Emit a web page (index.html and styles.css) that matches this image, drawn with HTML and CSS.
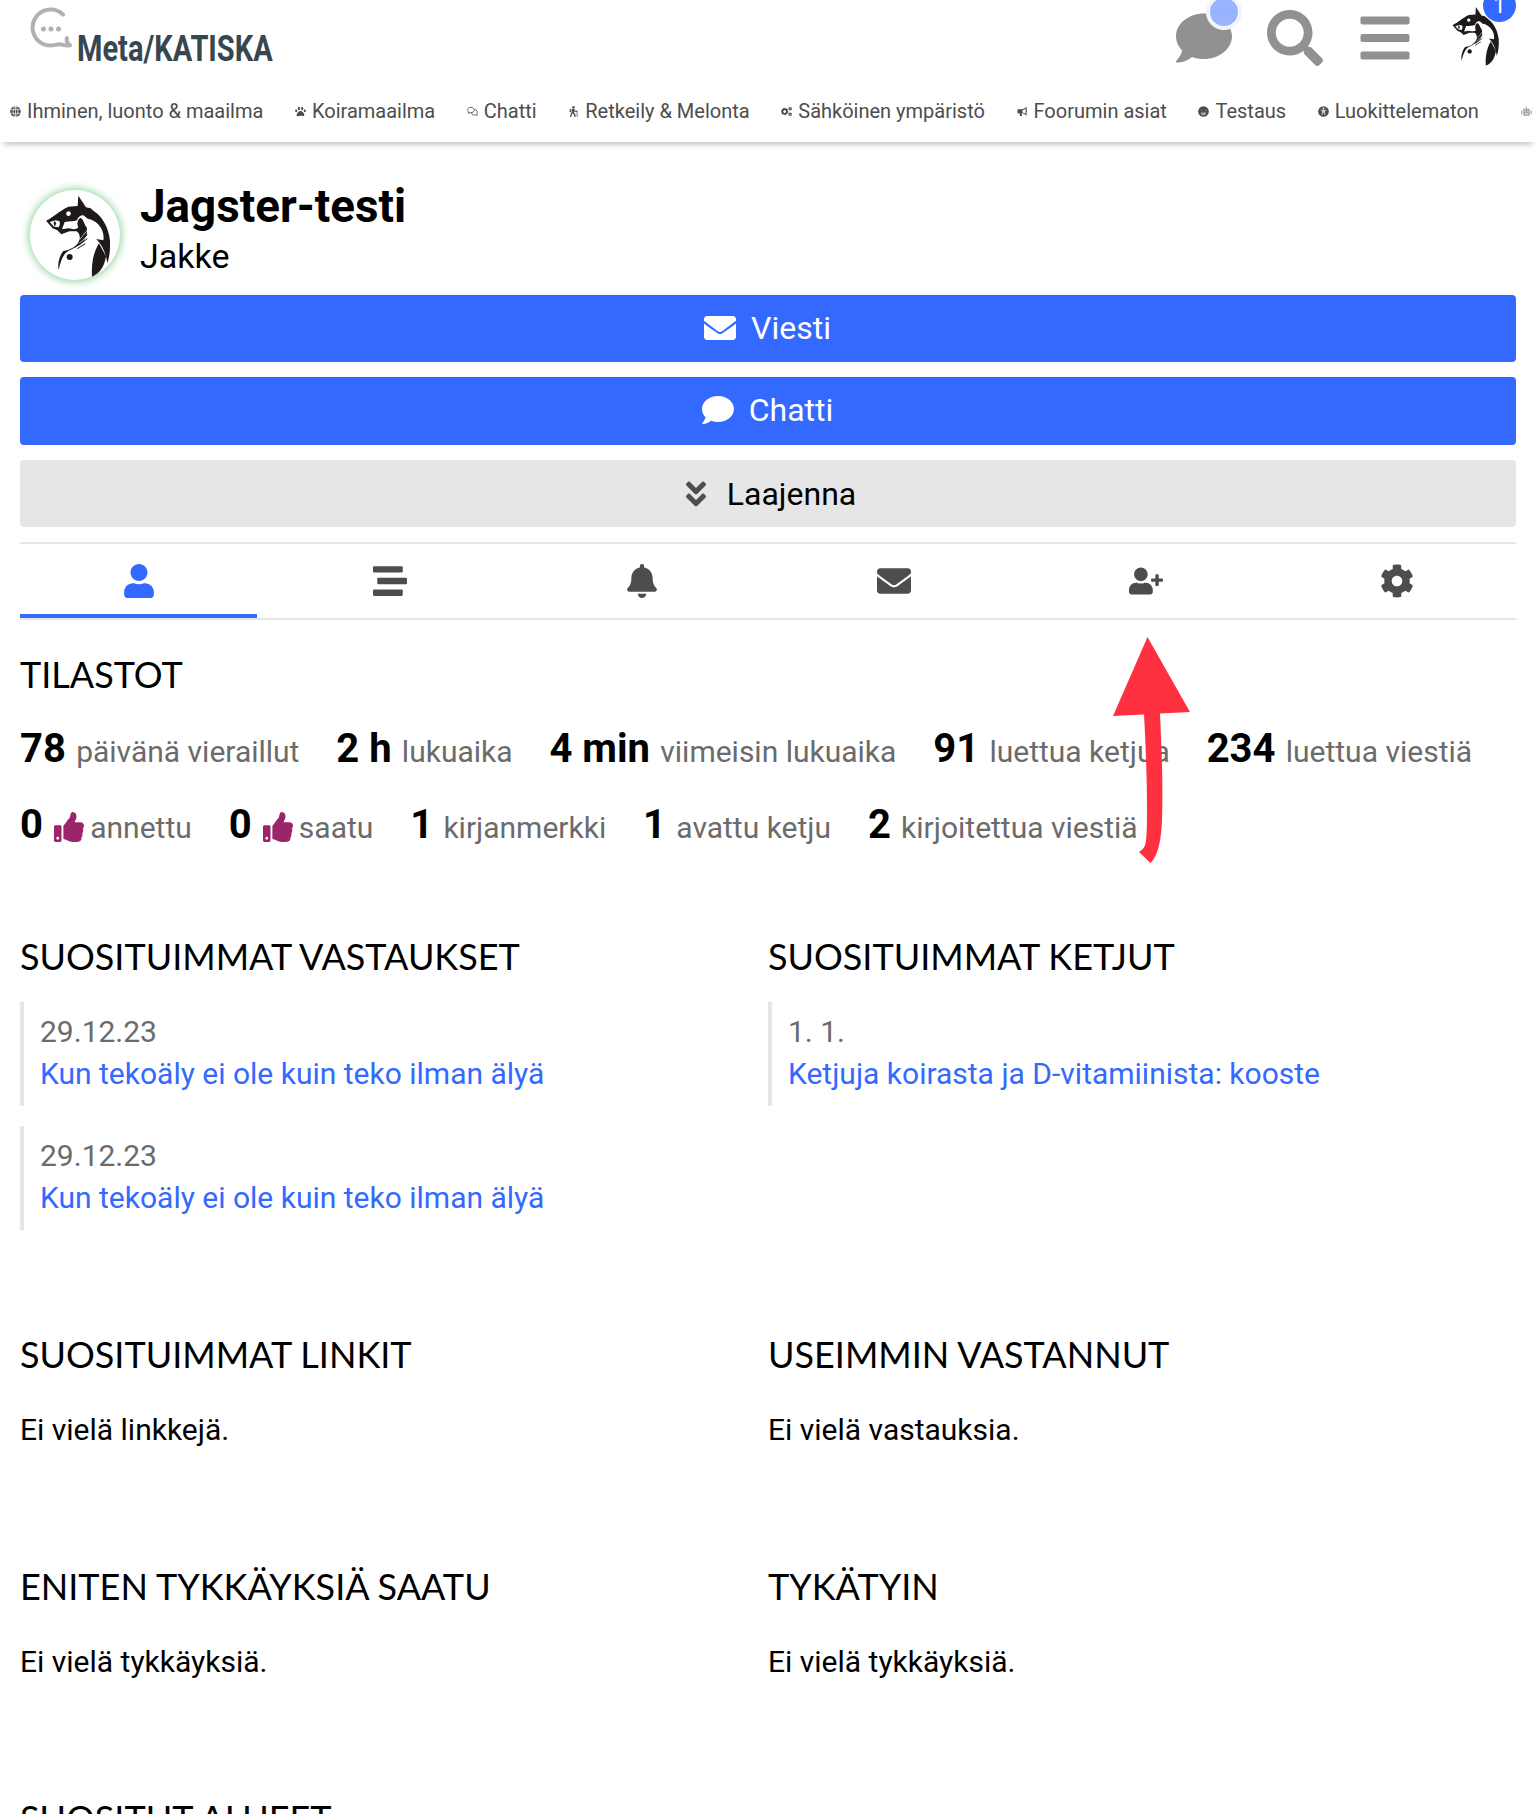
FILE: index.html
```
<!DOCTYPE html>
<html lang="fi">
<head>
  <meta charset="UTF-8" />
  <meta name="viewport" content="width=device-width, initial-scale=1.0"/>
  <title>Jagster-testi - Meta/KATISKA</title>
  <link rel="stylesheet" href="styles.css">
</head>
<body>

  <!-- shared icons -->
  <svg class="sprite" width="0" height="0">
    <symbol id="comment" viewBox="0 0 512 512"><path d="M256 32C114.6 32 0 125.1 0 240c0 49.6 21.4 95 57 130.7C44.5 421.1 2.7 466 2.2 466.5c-2.2 2.3-2.8 5.7-1.5 8.7S4.8 480 8 480c66.3 0 116-31.8 140.6-51.4 32.7 12.3 69 19.4 107.4 19.4 141.4 0 256-93.1 256-208S397.4 32 256 32z"/></symbol>
    <symbol id="envelope" viewBox="0 0 512 512"><path d="M502.3 190.8c3.9-3.1 9.7-.2 9.7 4.7V400c0 26.5-21.5 48-48 48H48c-26.5 0-48-21.5-48-48V195.6c0-5 5.7-7.8 9.7-4.7 22.4 17.4 52.1 39.5 154.1 113.6 21.1 15.4 56.7 47.8 92.2 47.6 35.7.3 72-32.8 92.3-47.6 102-74.1 131.6-96.3 154-113.7zM256 320c23.2.4 56.6-29.2 73.4-41.4 132.7-96.3 142.8-104.7 173.4-128.7 5.8-4.5 9.2-11.5 9.2-18.9v-19c0-26.5-21.5-48-48-48H48c-26.5 0-48 21.5-48 48v19c0 7.4 3.4 14.3 9.2 18.9 30.6 23.9 40.7 32.4 173.4 128.7 16.8 12.2 50.2 41.8 73.4 41.4z"/></symbol>
    <symbol id="thumbs-up" viewBox="0 0 512 512"><path d="M104 224H24c-13.255 0-24 10.745-24 24v240c0 13.255 10.745 24 24 24h80c13.255 0 24-10.745 24-24V248c0-13.255-10.745-24-24-24zM64 472c-13.255 0-24-10.745-24-24s10.745-24 24-24 24 10.745 24 24-10.745 24-24 24zM384 81.452c0 42.416-25.97 66.208-33.277 94.548h101.723c33.397 0 59.397 27.746 59.553 58.098.084 17.938-7.546 37.249-19.439 49.197l-.11.11c9.836 23.337 8.237 56.037-9.308 79.469 8.681 25.895-.069 57.704-16.382 74.757 4.298 17.598 2.244 32.575-6.148 44.632C440.202 511.587 389.616 512 346.839 512l-2.845-.001c-48.287-.017-87.806-17.598-119.56-31.725-15.957-7.099-36.821-15.887-52.651-16.178-6.54-.12-11.783-5.457-11.783-11.998v-213.77c0-3.2 1.282-6.271 3.558-8.521 39.614-39.144 56.648-80.587 89.117-113.111 14.804-14.832 20.188-37.236 25.393-58.902C282.515 39.293 291.817 0 312 0c24 0 72 8 72 81.452z"/></symbol>
    <symbol id="dog" viewBox="90 60 270 270">
      <g fill="#1d1a19">
        <path fill-rule="evenodd" d="M235 77L258 112L272 115L280 122C306 138 326 172 330 212C331 240 328 262 322 280C318 252 308 226 289 207L310 211C316 178 290 150 263 146L252 137C243 133 234 141 231 151C222 155 208 154 194 156L186 178L206 175C218 178 228 180 235 172C230 164 231 148 242 143C252 150 252 162 260 172C264 190 258 206 246 218C230 234 208 238 196 250C186 262 180 280 176 300C172 280 178 258 190 243C210 240 226 232 236 216C242 204 240 192 230 184L208 184L184 193L172 181L158 175L138 152C160 142 176 124 205 110L233 108ZM205 124A7 7 0 1 0 206 138A7 7 0 1 0 205 124ZM149 156L160 153L166 151L178 153L180 162L176 172L162 170Z"/>
        <path d="M163 152L169 160L164 170L161 160Z"/>
        <circle cx="209" cy="261" r="9"/>
        <path d="M297 220L318 259C314 286 302 310 276 320C274 286 278 250 297 220Z"/>
      </g>
      <path d="M238 214L262 194M236 226L262 206M232 236L256 221" stroke="#1d1a19" stroke-width="3" fill="none"/>
      <path d="M240 208L262 180M238 220L264 196" stroke="#fff" stroke-width="2" fill="none"/>
    </symbol>
  </svg>

  <header class="site-header">
    <div class="top-bar">
      <a class="logo" href="#">
        <svg class="logo-bubble" viewBox="0 0 44 44">
          <path d="M33 8.5A18 18 0 1 0 17 39.2C21 40.5 26 38.5 29 38.3S36 40.5 40 39.3C37 37 36 34.5 37 32" fill="none" stroke="#b1b1b1" stroke-width="4" stroke-linecap="round" stroke-linejoin="round"/>
          <g fill="#b1b1b1"><circle cx="13.5" cy="23" r="2.500"/><circle cx="21" cy="23" r="2.500"/><circle cx="28.500" cy="23" r="2.500"/></g>
        </svg>
        <span class="logo-text">Meta/KATISKA</span>
      </a>
      <div class="header-icons">
        <a class="header-icon" href="#"><svg><use href="#comment"/></svg><span class="chat-dot"></span></a>
        <a class="header-icon" href="#"><svg viewBox="0 0 512 512"><path d="M505 442.7L405.3 343c-4.5-4.5-10.6-7-17-7H372c27.6-35.3 44-79.7 44-128C416 93.1 322.9 0 208 0S0 93.1 0 208s93.1 208 208 208c48.3 0 92.7-16.4 128-44v16.3c0 6.4 2.5 12.5 7 17l99.7 99.7c9.4 9.4 24.6 9.4 33.9 0l28.3-28.3c9.4-9.4 9.4-24.6.1-34zM208 336c-70.7 0-128-57.2-128-128 0-70.7 57.2-128 128-128 70.7 0 128 57.2 128 128 0 70.7-57.2 128-128 128z"/></svg></a>
        <a class="header-icon" href="#"><svg viewBox="-32 0 512 512"><rect y="60" width="448" height="72" rx="16"/><rect y="220" width="448" height="72" rx="16"/><rect y="380" width="448" height="72" rx="16"/></svg></a>
        <a class="header-avatar" href="#"><svg><use href="#dog"/></svg><span class="badge">1</span></a>
      </div>
    </div>
    <nav class="categories">
      <a href="#"><svg viewBox="0 0 12 12"><circle cx="6" cy="6" r="5.8"/><path d="M0 4h12M0 8h12M6 0v12M6 0C2.500 3 2.500 9 6 12M6 0C9.500 3 9.500 9 6 12" stroke="#fff" stroke-width=".7" fill="none"/></svg>Ihminen, luonto &amp; maailma</a>
      <a href="#"><svg viewBox="0 0 12 12"><path d="M6 5.500C4 5.500 1.800 8.200 1.800 10S4 11.300 6 10.700S10.200 11.800 10.200 10S8 5.500 6 5.500Z"/><ellipse cx="1.300" cy="5.300" rx="1.200" ry="1.600"/><ellipse cx="4.200" cy="2.700" rx="1.200" ry="1.800"/><ellipse cx="7.800" cy="2.700" rx="1.200" ry="1.800"/><ellipse cx="10.700" cy="5.300" rx="1.200" ry="1.600"/></svg>Koiramaailma</a>
      <a href="#"><svg viewBox="0 0 12 12"><path d="M1 7.800C2 7.500 2 7 1.300 6C-.5 3 2 1.500 4.200 1.500S8 2.800 8 4.500S6 7.300 4 7.300ZM8.200 4C11 4 12 6.200 10.700 8.200L11.300 10C9 9.800 5.500 10.500 4.600 7.500" fill="none" stroke="#4d4d4d" stroke-width=".9"/></svg>Chatti</a>
      <a href="#"><svg viewBox="0 0 12 12"><circle cx="6" cy="1.300" r="1.300"/><path d="M4.600 3L7 3L7.500 5L9.500 5.500V6.500L6.800 6L6.500 7.200L8 9L8.500 12H7L6.500 9.500L4.700 8L3.500 12H2L4 6ZM2.500 3L3.800 3.400L3 6.800L1.500 6.300ZM9.500 4.500h.8V12h-.8Z"/></svg>Retkeily &amp; Melonta</a>
      <a href="#"><svg viewBox="0 0 12 12"><circle cx="4" cy="6" r="2.500" fill="none" stroke="#4d4d4d" stroke-width="2"/><circle cx="4" cy="6" r="3.600" fill="none" stroke="#4d4d4d" stroke-width="1" stroke-dasharray="1.800 1.900"/><circle cx="10" cy="3" r="1.300" fill="none" stroke="#4d4d4d" stroke-width="1.300"/><circle cx="10" cy="9" r="1.300" fill="none" stroke="#4d4d4d" stroke-width="1.300"/></svg>Sähköinen ympäristö</a>
      <a href="#"><svg viewBox="0 0 12 12"><path fill-rule="evenodd" d="M.5 3.500H5C7.500 3.500 9 2 10.500.8V4.800Q11.800 5.500 10.500 6.800V10.500C9 9.200 7.500 8 5.200 8Q5 9.500 5.800 11H3.500Q2.700 9.500 3 8H.5ZM6 4.600V7Q8 7.300 9.400 8.300V3Q8 4.300 6 4.600Z"/></svg>Foorumin asiat</a>
      <a href="#"><svg viewBox="0 0 12 12"><circle cx="6" cy="6" r="5.8"/><path d="M2.800 7H9.200Q8.500 10 6 10T2.800 7ZM3 4L5 4.600L3 5.200ZM9 4L7 4.600L9 5.200Z" fill="#aaa"/></svg>Testaus</a>
      <a href="#"><svg viewBox="0 0 12 12"><circle cx="6" cy="6" r="5.8"/><circle cx="6" cy="2.700" r="1" fill="#fff"/><path d="M3 4.500L5 5V7L4.300 10M9 4.500L7 5V7L7.700 10M5 5H7M5.500 5V7H6.500V5" stroke="#fff" stroke-width=".8" fill="none"/></svg>Luokittelematon</a>
      <a class="faded" href="#"><svg viewBox="0 0 12 12"><path d="M5.500.5h1V3h3v7.500h-7V3h3ZM.2 5h1.300v4H.2ZM10.500 5h1.300v4h-1.300Z"/><path d="M4 5.500h1.200M6.800 5.500H8M4 8.500h4" stroke="#fff" stroke-width="1"/></svg></a>
    </nav>
  </header>

  <main>
    <section class="profile">
      <div class="avatar"><svg><use href="#dog"/></svg></div>
      <div class="names">
        <h1>Jagster-testi</h1>
        <div class="full-name">Jakke</div>
      </div>
    </section>

    <div class="controls">
      <button class="btn primary"><svg><use href="#envelope"/></svg>Viesti</button>
      <button class="btn primary"><svg><use href="#comment"/></svg>Chatti</button>
      <button class="btn expand"><svg viewBox="0 0 320 512"><path d="M143 256.300L7 120.300c-9.400-9.400-9.400-24.600 0-33.900l22.600-22.600c9.400-9.400 24.600-9.400 33.900 0l96.400 96.400 96.400-96.400c9.400-9.400 24.600-9.400 33.900 0L313 86.300c9.400 9.400 9.400 24.600 0 33.900l-136 136c-9.400 9.500-24.600 9.500-34 .1zm34 192l136-136c9.400-9.400 9.400-24.600 0-33.900l-22.600-22.600c-9.400-9.400-24.600-9.400-33.900 0L160 352.100l-96.400-96.400c-9.400-9.400-24.600-9.400-33.900 0L7 278.300c-9.400 9.400-9.400 24.600 0 33.900l136 136c9.400 9.500 24.600 9.500 34 .1z"/></svg>Laajenna</button>
    </div>

    <nav class="tabs">
      <a class="active" href="#"><svg viewBox="-32 0 512 512"><path d="M224 256c70.700 0 128-57.300 128-128S294.700 0 224 0 96 57.300 96 128s57.300 128 128 128zm89.600 32h-16.700c-22.200 10.200-46.900 16-72.900 16s-50.600-5.800-72.900-16h-16.700C60.200 288 0 348.200 0 422.400V464c0 26.500 21.500 48 48 48h352c26.500 0 48-21.500 48-48v-41.600c0-74.200-60.200-134.400-134.400-134.400z"/></svg></a>
      <a href="#"><svg viewBox="0 0 512 512"><rect y="32" width="448" height="96" rx="16"/><rect x="64" y="208" width="448" height="96" rx="16"/><rect y="384" width="448" height="96" rx="16"/></svg></a>
      <a href="#"><svg viewBox="-32 0 512 512"><path d="M224 512c35.320 0 63.970-28.650 63.970-64H160.030c0 35.350 28.650 64 63.970 64zm215.390-149.710c-19.320-20.760-55.470-51.990-55.470-154.290 0-77.700-54.480-139.900-127.940-155.160V32c0-17.670-14.320-32-31.980-32s-31.980 14.330-31.980 32v20.840C118.560 68.100 64.080 130.300 64.080 208c0 102.300-36.150 133.530-55.470 154.290-6 6.450-8.660 14.160-8.610 21.710.11 16.400 12.980 32 32.100 32h383.800c19.120 0 32-15.600 32.100-32 .05-7.550-2.610-15.270-8.610-21.710z"/></svg></a>
      <a href="#"><svg><use href="#envelope"/></svg></a>
      <a href="#"><svg viewBox="0 0 640 512"><path d="M624 208h-64v-64c0-8.800-7.200-16-16-16h-32c-8.800 0-16 7.200-16 16v64h-64c-8.800 0-16 7.200-16 16v32c0 8.800 7.200 16 16 16h64v64c0 8.800 7.200 16 16 16h32c8.800 0 16-7.200 16-16v-64h64c8.800 0 16-7.200 16-16v-32c0-8.800-7.200-16-16-16zm-400 48c70.700 0 128-57.300 128-128S294.700 0 224 0 96 57.300 96 128s57.300 128 128 128zm89.600 32h-16.700c-22.200 10.200-46.900 16-72.900 16s-50.600-5.800-72.900-16h-16.700C60.200 288 0 348.200 0 422.400V464c0 26.500 21.500 48 48 48h352c26.500 0 48-21.500 48-48v-41.600c0-74.200-60.200-134.400-134.400-134.400z"/></svg></a>
      <a href="#"><svg viewBox="0 0 512 512"><path d="M487.400 315.700l-42.600-24.600c4.300-23.200 4.300-47 0-70.200l42.600-24.600c4.900-2.800 7.100-8.600 5.500-14-11.100-35.600-30-67.800-54.700-94.600-3.800-4.100-10-5.100-14.800-2.300L380.800 110c-17.900-15.400-38.500-27.300-60.800-35.100V25.800c0-5.600-3.900-10.500-9.400-11.700-36.700-8.200-74.300-7.800-109.200 0-5.500 1.200-9.400 6.100-9.400 11.700V75c-22.200 7.900-42.800 19.800-60.800 35.100L88.700 85.500c-4.900-2.800-11-1.900-14.800 2.300-24.700 26.700-43.600 58.900-54.700 94.600-1.700 5.400.6 11.200 5.500 14L67.300 221c-4.300 23.200-4.300 47 0 70.200l-42.600 24.600c-4.900 2.800-7.100 8.600-5.500 14 11.100 35.600 30 67.800 54.700 94.600 3.800 4.100 10 5.100 14.800 2.300l42.600-24.600c17.900 15.400 38.500 27.300 60.800 35.100v49.200c0 5.600 3.900 10.500 9.400 11.700 36.700 8.200 74.300 7.800 109.200 0 5.500-1.200 9.400-6.100 9.400-11.700v-49.200c22.200-7.900 42.800-19.800 60.800-35.100l42.600 24.600c4.900 2.800 11 1.900 14.800-2.300 24.700-26.700 43.600-58.900 54.700-94.600 1.500-5.500-.7-11.300-5.600-14.100zM256 336c-44.100 0-80-35.900-80-80s35.900-80 80-80 80 35.900 80 80-35.900 80-80 80z"/></svg></a>
    </nav>

    <section class="stats">
      <h2>Tilastot</h2>
      <ul>
        <li><b>78</b> päivänä vieraillut</li>
        <li><b>2 h</b> lukuaika</li>
        <li><b>4 min</b> viimeisin lukuaika</li>
        <li><b>91</b> luettua ketjua</li>
        <li><b>234</b> luettua viestiä</li>
        <li><b>0</b> <svg><use href="#thumbs-up"/></svg>annettu</li>
        <li><b>0</b> <svg><use href="#thumbs-up"/></svg>saatu</li>
        <li><b>1</b> kirjanmerkki</li>
        <li><b>1</b> avattu ketju</li>
        <li><b>2</b> kirjoitettua viestiä</li>
      </ul>
    </section>

    <div class="row tall">
      <section>
        <h2>Suosituimmat vastaukset</h2>
        <div class="quote"><time>29.12.23</time><a href="#">Kun tekoäly ei ole kuin teko ilman älyä</a></div>
        <div class="quote"><time>29.12.23</time><a href="#">Kun tekoäly ei ole kuin teko ilman älyä</a></div>
      </section>
      <section>
        <h2>Suosituimmat ketjut</h2>
        <div class="quote"><time>1. 1.</time><a href="#">Ketjuja koirasta ja D-vitamiinista: kooste</a></div>
      </section>
    </div>
    <div class="row">
      <section><h2>Suosituimmat linkit</h2><p>Ei vielä linkkejä.</p></section>
      <section><h2>Useimmin vastannut</h2><p>Ei vielä vastauksia.</p></section>
    </div>
    <div class="row">
      <section><h2>Eniten tykkäyksiä saatu</h2><p>Ei vielä tykkäyksiä.</p></section>
      <section><h2>Tykätyin</h2><p>Ei vielä tykkäyksiä.</p></section>
    </div>
    <div class="row">
      <section><h2>Suositut alueet</h2></section>
    </div>

    <svg class="arrow" viewBox="0 0 80 230"><path d="M35.500 1L78 76L48 77.500C50 120 51 150 50 185C49 205 46 220 38.500 227L27 216C32 213 33 210 34 205C36 190 35 130 32 78.500L1 80Z"/></svg>
  </main>

</body>
</html>
```
FILE: styles.css
```
body {
  margin: 0;
  height: 1814px;
  overflow: hidden;
  font-family: Roboto, sans-serif;
  font-size: 30px;
  line-height: 42px;
  background-color: #fff;
  color: #000;
}

a {
  color: #3369ff;
  text-decoration: none;
}

svg {
  fill: currentColor;
}

.sprite {
  position: absolute;
}

.site-header {
  height: 142px;
  box-shadow: 0 6px 6px -4px rgba(0,0,0,0.28);
}

.top-bar {
  display: flex;
  justify-content: space-between;
  height: 92px;
  padding: 0 30px;
}

.logo {
  display: flex;
  color: #36474f;
}

.logo-bubble {
  width: 44px;
  height: 44px;
  margin-top: 6px;
}

.logo-text {
  width: 200px;
  margin: 28px 0 0 3px;
  font-size: 36.500px;
  font-weight: bold;
  transform: scaleX(0.795);
  transform-origin: left;
}

.header-icons {
  display: flex;
  gap: 34.700px;
}

.header-icon,
.header-avatar {
  position: relative;
  color: #919191;
}

.header-icon svg {
  display: block;
  width: 56px;
  height: 56px;
  margin-top: 10px;
}

.header-avatar {
  margin-left: -7px;
}

.header-avatar svg {
  display: block;
  width: 65px;
  height: 65px;
  margin-top: 3px;
}

.chat-dot {
  position: absolute;
  left: 30px;
  top: -6px;
  width: 28px;
  height: 28px;
  border: 4px solid #f4f5f8;
  border-radius: 50%;
  background-color: #99b4ff;
}

.badge {
  position: absolute;
  left: 42px;
  top: -11px;
  width: 33px;
  height: 33px;
  border-radius: 50%;
  background-color: #3369ff;
  color: #fff;
  font-size: 22px;
  line-height: 33px;
  text-align: center;
}

.categories {
  display: flex;
  gap: 31.600px;
  height: 38px;
  padding-left: 10px;
  overflow: hidden;
  white-space: nowrap;
}

.categories a {
  display: flex;
  align-items: center;
  color: #4d4d4d;
  font-size: 20px;
  line-height: 38px;
}

.categories svg {
  width: 11px;
  height: 11px;
  margin-right: 6px;
}

.categories .faded {
  margin-left: 11px;
  opacity: 0.5;
}

main {
  position: relative;
  padding: 0 20px;
}

.profile {
  display: flex;
  padding: 39px 0 0 10px;
  height: 114px;
}

.avatar {
  width: 90px;
  height: 90px;
  margin-top: 9px;
  border-radius: 50%;
  box-shadow: 0 0 9px 1px #86cf95;
}

.avatar svg {
  width: 90px;
  height: 90px;
}

.names {
  margin-left: 20px;
}

h1 {
  margin: 0;
  font-size: 45.800px;
  line-height: 52px;
}

.full-name {
  font-size: 34px;
  line-height: 46px;
}

.controls {
  display: flex;
  flex-direction: column;
  gap: 15px;
  height: 232px;
}

.btn {
  flex: 1;
  display: flex;
  align-items: center;
  justify-content: center;
  gap: 15px;
  padding: 0 1px 1px 0;
  border: none;
  border-radius: 4px;
  font-family: inherit;
  font-size: 32px;
}

.btn svg {
  width: 32px;
  height: 32px;
}

.primary {
  background-color: #3369ff;
  color: #fff;
}

.expand {
  gap: 21px;
  padding: 1px 0 0 6px;
  background-color: #e6e6e6;
  color: #000;
}

.expand svg {
  width: 20px;
  color: #4d4d4d;
}

.tabs {
  display: flex;
  gap: 14.800px;
  height: 74px;
  margin-top: 15px;
  border-top: 2px solid #e6e6e6;
  border-bottom: 2px solid #e6e6e6;
}

.tabs a {
  flex: 1;
  display: flex;
  align-items: center;
  justify-content: center;
  padding-top: 4px;
  border-bottom: 4px solid transparent;
  color: #4d4d4d;
}

.tabs a.active {
  color: #3369ff;
  border-color: #3369ff;
}

.tabs svg {
  width: 34px;
  height: 34px;
}

h2 {
  margin: 0;
  font-family: Lato, sans-serif;
  font-size: 36px;
  font-weight: normal;
  line-height: 44px;
  text-transform: uppercase;
}

.stats {
  padding-top: 32px;
  height: 282px;
}

.stats ul {
  display: flex;
  flex-wrap: wrap;
  margin: 15px 0 0;
  padding: 0;
  list-style: none;
}

.stats li {
  height: 76px;
  margin-right: 36.900px;
  line-height: 76px;
  color: #6b6b6b;
}

.stats b {
  margin-right: 2.800px;
  font-size: 40px;
  color: #000;
}

.stats svg {
  width: 30px;
  height: 30px;
  margin: 0 6px 0 1px;
  vertical-align: -4px;
  color: #9c2469;
}

.row {
  display: grid;
  grid-template-columns: 1fr 1fr;
  height: 232px;
}

.row.tall {
  height: 398px;
}

.quote {
  height: 91px;
  margin-top: 20px;
  padding: 9px 0 4px 16px;
  border-left: 4px solid #e6e6e6;
}

h2 + .quote {
  margin-top: 24px;
}

.quote time,
.quote a {
  display: block;
}

.quote time {
  color: #6b6b6b;
}

.row p {
  margin: 33px 0 0;
}

.arrow {
  position: absolute;
  left: 1112px;
  top: 494px;
  width: 80px;
  height: 230px;
  color: #ff3040;
}
```
